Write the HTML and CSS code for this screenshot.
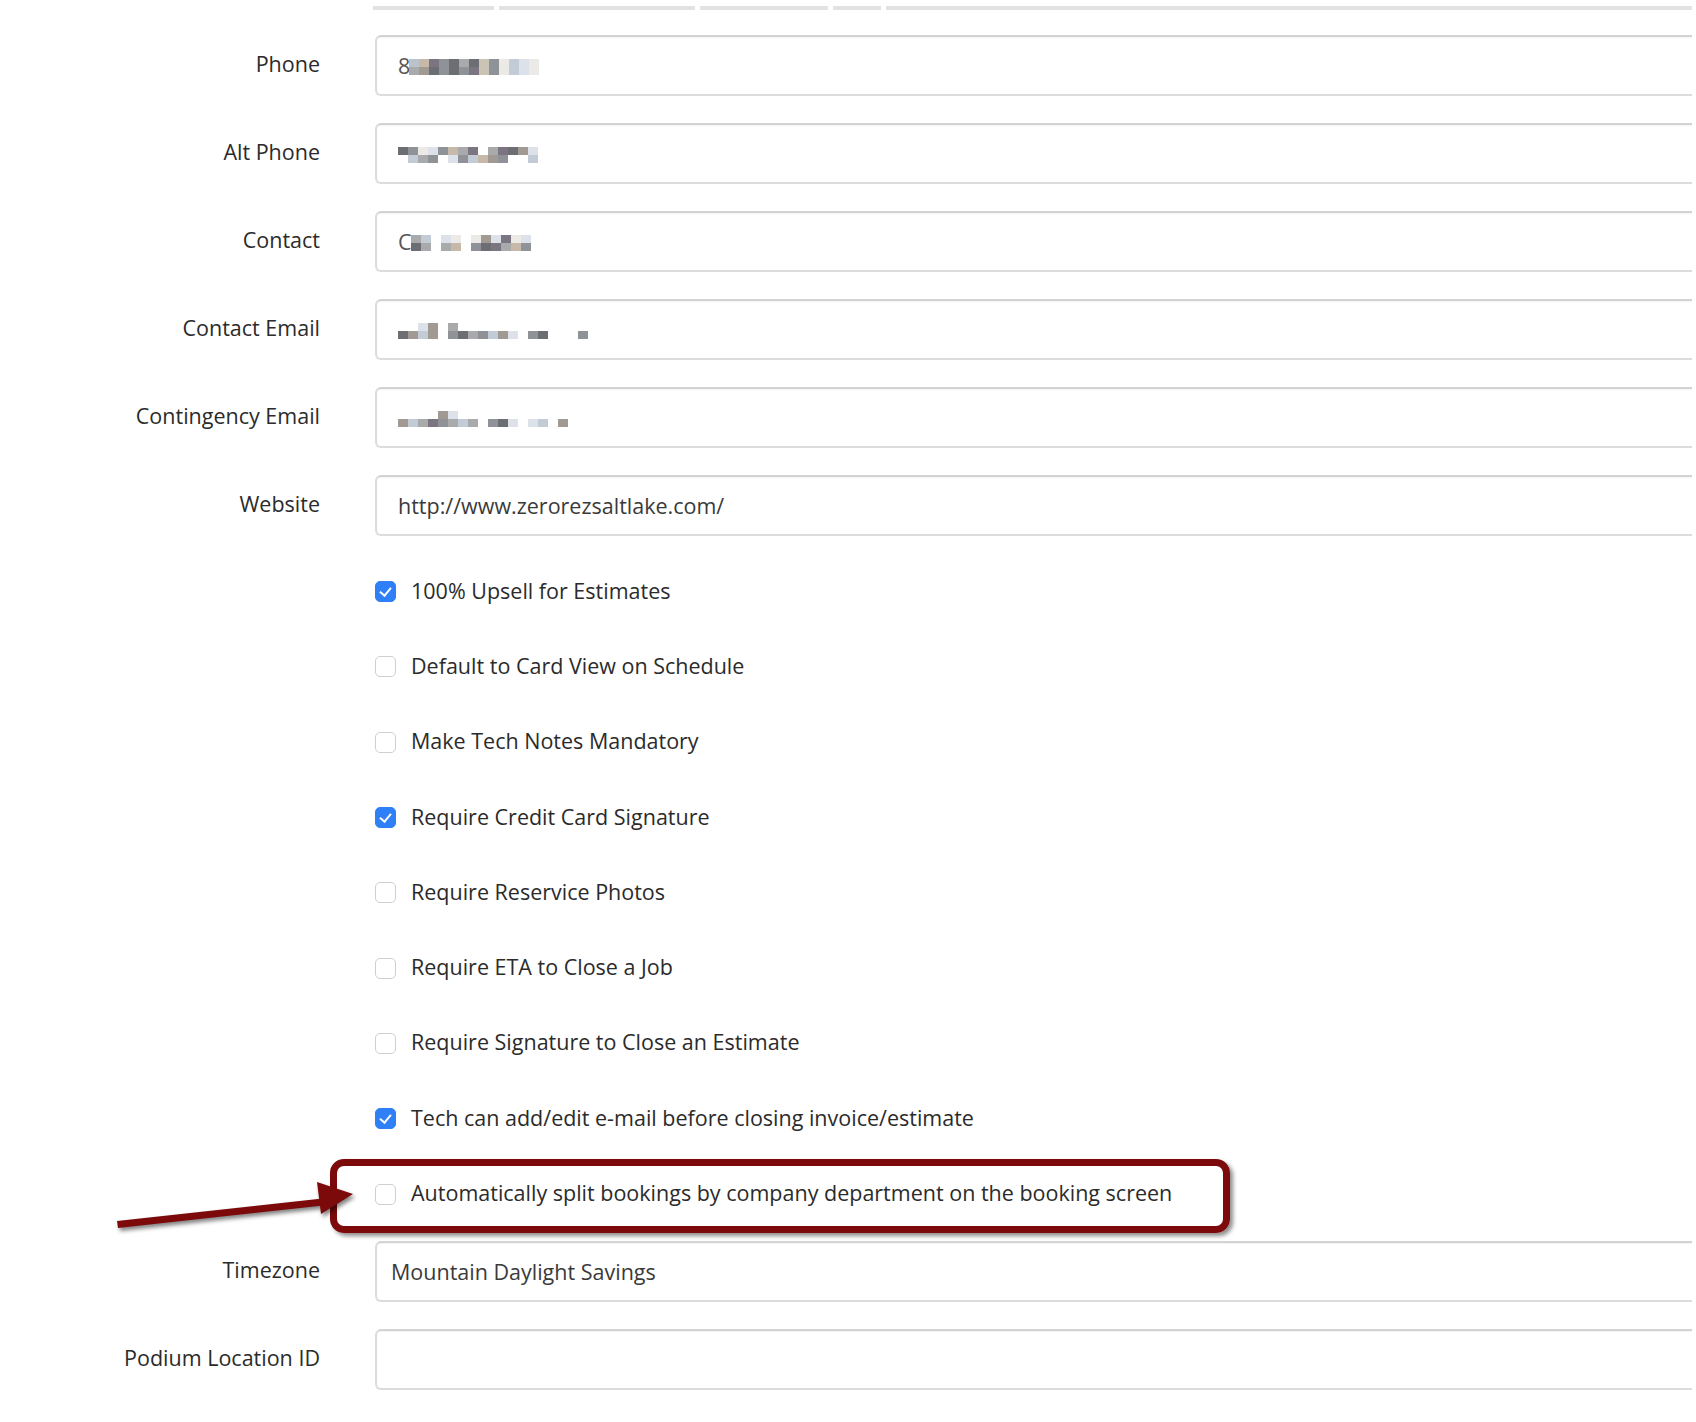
FILE: index.html
```html
<!DOCTYPE html>
<html>
<head>
<meta charset="utf-8">
<link rel="stylesheet" href="styles.css">
</head>
<body>
<div class="page">
  <div class="topbar">
    <span class="seg s1"></span><span class="seg s2"></span><span class="seg s3"></span><span class="seg s4"></span><span class="seg s5"></span>
  </div>

  <div class="field">
    <label class="lbl">Phone</label>
    <div class="input"><span class="lead">8</span><span class="mosaic"><span class="mrow"><i class="c1"></i><i class="c8"></i><i class="c3"></i><i class="c4"></i><i class="c5"></i><i class="c6"></i><i class="c5"></i><i class="c7"></i><i class="c4"></i><i class="c11"></i><i class="c9"></i><i class="c10"></i><i class="c11"></i></span><span class="mrow"><i class="c6"></i><i class="c2"></i><i class="c5"></i><i class="c4"></i><i class="c5"></i><i class="c4"></i><i class="c3"></i><i class="c7"></i><i class="c4"></i><i class="c11"></i><i class="c9"></i><i class="c10"></i><i class="c11"></i></span></span></div>
  </div>
  <div class="field">
    <label class="lbl">Alt Phone</label>
    <div class="input"><span class="mosaic"><span class="mrow"><i class="c5"></i><i class="c4"></i><i class="c11"></i><i class="c10"></i><i class="c4"></i><i class="c8"></i><i class="c6"></i><i class="c3"></i><i class="w"></i><i class="c6"></i><i class="c3"></i><i class="c5"></i><i class="c2"></i><i class="c10"></i></span><span class="mrow"><i class="w"></i><i class="c9"></i><i class="c6"></i><i class="c4"></i><i class="w"></i><i class="c10"></i><i class="c4"></i><i class="c9"></i><i class="c8"></i><i class="c2"></i><i class="c4"></i><i class="w"></i><i class="w"></i><i class="c9"></i></span></span></div>
  </div>
  <div class="field">
    <label class="lbl">Contact</label>
    <div class="input"><span class="lead">C</span><span class="mosaic"><span class="mrow"><i class="c6"></i><i class="c9"></i><i class="w"></i><i class="c10"></i><i class="c11"></i><i class="w"></i><i class="c11"></i><i class="c2"></i><i class="c10"></i><i class="c3"></i><i class="c11"></i><i class="c10"></i></span><span class="mrow"><i class="c5"></i><i class="c6"></i><i class="w"></i><i class="c6"></i><i class="c8"></i><i class="w"></i><i class="c4"></i><i class="c5"></i><i class="c3"></i><i class="c6"></i><i class="c8"></i><i class="c4"></i></span></span></div>
  </div>
  <div class="field">
    <label class="lbl">Contact Email</label>
    <div class="input"><span class="mosaic"><span class="mrow"><i class="w"></i><i class="w"></i><i class="c10"></i><i class="c2"></i><i class="w"></i><i class="c6"></i><i class="w"></i><i class="w"></i><i class="w"></i><i class="w"></i><i class="w"></i><i class="w"></i><i class="w"></i><i class="w"></i><i class="w"></i><i class="w"></i><i class="w"></i><i class="w"></i><i class="w"></i><i class="w"></i><i class="w"></i></span><span class="mrow"><i class="c5"></i><i class="c2"></i><i class="c9"></i><i class="c2"></i><i class="w"></i><i class="c4"></i><i class="c5"></i><i class="c6"></i><i class="c4"></i><i class="c9"></i><i class="c2"></i><i class="c10"></i><i class="w"></i><i class="c4"></i><i class="c5"></i><i class="w"></i><i class="w"></i><i class="w"></i><i class="c4"></i><i class="w"></i><i class="w"></i></span></span></div>
  </div>
  <div class="field">
    <label class="lbl">Contingency Email</label>
    <div class="input"><span class="mosaic"><span class="mrow"><i class="w"></i><i class="w"></i><i class="w"></i><i class="w"></i><i class="c2"></i><i class="c10"></i><i class="w"></i><i class="w"></i><i class="w"></i><i class="w"></i><i class="w"></i><i class="w"></i><i class="w"></i><i class="w"></i><i class="w"></i><i class="w"></i><i class="w"></i><i class="w"></i></span><span class="mrow"><i class="c2"></i><i class="c9"></i><i class="c6"></i><i class="c3"></i><i class="c4"></i><i class="c6"></i><i class="c9"></i><i class="c6"></i><i class="w"></i><i class="c4"></i><i class="c5"></i><i class="c10"></i><i class="w"></i><i class="c10"></i><i class="c9"></i><i class="w"></i><i class="c2"></i><i class="w"></i></span></span></div>
  </div>
  <div class="field">
    <label class="lbl">Website</label>
    <div class="input">http://www.zerorezsaltlake.com/</div>
  </div>

  <div class="checks">
    <div class="check"><span class="box on"></span><span class="ctext">100% Upsell for Estimates</span></div>
    <div class="check"><span class="box"></span><span class="ctext">Default to Card View on Schedule</span></div>
    <div class="check"><span class="box"></span><span class="ctext">Make Tech Notes Mandatory</span></div>
    <div class="check"><span class="box on"></span><span class="ctext">Require Credit Card Signature</span></div>
    <div class="check"><span class="box"></span><span class="ctext">Require Reservice Photos</span></div>
    <div class="check"><span class="box"></span><span class="ctext">Require ETA to Close a Job</span></div>
    <div class="check"><span class="box"></span><span class="ctext">Require Signature to Close an Estimate</span></div>
    <div class="check"><span class="box on"></span><span class="ctext">Tech can add/edit e-mail before closing invoice/estimate</span></div>
    <div class="check marked">
      <span class="box"></span><span class="ctext">Automatically split bookings by company department on the booking screen</span>
      <span class="highlight"></span>
      <svg class="arrow" width="270" height="70" viewBox="0 0 270 70">
        <g fill="#7c0a0a">
          <path d="M2 52 L212 29 L213 36 L3 59 Z"/>
          <path d="M202 13 L238 25 L206 45 Z"/>
        </g>
      </svg>
    </div>
  </div>

  <div class="field tz">
    <label class="lbl">Timezone</label>
    <div class="input sel">Mountain Daylight Savings</div>
  </div>
  <div class="field">
    <label class="lbl">Podium Location ID</label>
    <div class="input"></div>
  </div>
</div>
</body>
</html>
```

FILE: styles.css
```css
html, body {
  margin: 0;
  padding: 0;
  background: #fff;
  overflow: hidden;
}
body {
  width: 1696px;
  height: 1422px;
  font-family: "Open Sans", "Liberation Sans", sans-serif;
  color: #333;
}
.page {
  padding-top: 6px;
}
.topbar {
  display: flex;
  gap: 5px;
  margin-left: 373px;
  margin-right: 4px;
  height: 4px;
}
.seg {
  height: 4px;
  background: #e2e2e2;
}
.s1 { width: 121px; }
.s2 { width: 196px; }
.s3 { width: 128px; }
.s4 { width: 48px; }
.s5 { flex: 1; }

.field {
  display: grid;
  grid-template-columns: 320px 1fr;
  column-gap: 55px;
  align-items: center;
  height: 61px;
  margin-top: 25px;
}
.field + .field { margin-top: 27px; }
.lbl {
  text-align: right;
  font-size: 21.5px;
  color: #2b2b2b;
  padding-bottom: 4px;
}
.input {
  height: 61px;
  box-sizing: border-box;
  margin-right: 4px;
  border: 2px solid #dcdcdc;
  border-top-color: #d3d3d3;
  border-right: none;
  border-radius: 6px 0 0 6px;
  box-shadow: inset 0 1px 1px rgba(0,0,0,0.05);
  display: flex;
  align-items: center;
  padding-left: 21px;
  font-size: 21.5px;
  color: #3a3a3a;
}
.input.sel { padding-left: 14px; }
.lead { color: #555; margin-right: -1px; }
.mosaic {
  display: inline-flex;
  flex-direction: column;
  align-items: flex-start;
  margin-top: 2px;
}
.mrow { display: flex; }
.mrow i {
  display: block;
  width: 10px;
  height: 8px;
}
.c1 { background: #b9c3cb; }
.c2 { background: #a09a93; }
.c3 { background: #7b7582; }
.c4 { background: #8f9296; }
.c5 { background: #6c6e74; }
.c6 { background: #a8aaac; }
.c7 { background: #c9c4b6; }
.c8 { background: #c7b9aa; }
.c9 { background: #c3ccd6; }
.c10 { background: #dde2ea; }
.c11 { background: #eceae6; }
.w { background: transparent; }

.checks {
  margin-top: 18px;
  margin-left: 375px;
}
.check {
  height: 75.3px;
  display: flex;
  align-items: center;
  font-size: 21.5px;
  color: #2b2b2b;
}
.box {
  width: 21px;
  height: 21px;
  box-sizing: border-box;
  border: 1.5px solid #cfcfcf;
  border-radius: 5px;
  margin-right: 15px;
  flex: none;
  position: relative;
  background: #fff;
}
.box.on {
  background: #2f7ff7;
  border-color: #2f7ff7;
}
.box.on::after {
  content: "";
  position: absolute;
  left: 6px;
  top: 3px;
  width: 5px;
  height: 9px;
  border: solid #fff;
  border-width: 0 2px 2px 0;
  transform: rotate(40deg);
}
.ctext { padding-bottom: 3px; }
.marked { position: relative; }
.highlight {
  position: absolute;
  left: -45px;
  top: 3px;
  width: 900px;
  height: 74px;
  box-sizing: border-box;
  border: 7px solid #7c0a0a;
  border-radius: 14px;
  box-shadow: 3px 3px 4px rgba(0,0,0,0.45);
}
.arrow {
  position: absolute;
  left: -260px;
  top: 13px;
  overflow: visible;
  filter: drop-shadow(2px 3px 2px rgba(0,0,0,0.5));
}
.field.tz { margin-top: 9px; }
```
